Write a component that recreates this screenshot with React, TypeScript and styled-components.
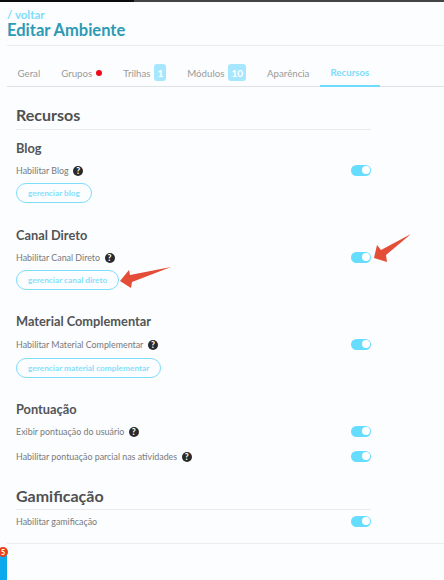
import styled, { createGlobalStyle } from 'styled-components'

const GlobalStyle = createGlobalStyle`
  html, body {
    margin: 0;
    padding: 0;
    height: 580px;
    overflow: hidden;
    background: #fbfdfe;
    font-family: Lato, "Open Sans", sans-serif;
  }
`

const Page = styled.div`
  position: relative;
  width: 444px;
  height: 580px;
  overflow: hidden;
`

const TopBar = styled.div`
  height: 2px;
  background: linear-gradient(to right, #0c0c0c 134px, #444 134px);
`

const Header = styled.header`
  margin-left: 7px;
  height: 44px;
  padding-top: 7px;
  box-sizing: border-box;
  border-bottom: 1px solid #eaeced;
`

const BackLink = styled.a`
  display: block;
  font-size: 11.5px;
  line-height: 12px;
  font-weight: 700;
  color: #7fdcfb;
`

const PageTitle = styled.h1`
  margin: 0;
  font-size: 16.5px;
  line-height: 19px;
  font-weight: 700;
  color: #2c9ab5;
`

const Tabs = styled.nav`
  display: flex;
  margin-left: 7px;
  height: 41px;
  box-sizing: border-box;
  border-bottom: 1px solid #dfe2e5;
`

const Tab = styled.div<{ $active?: boolean }>`
  display: flex;
  align-items: center;
  gap: 4px;
  height: 41px;
  box-sizing: border-box;
  padding: 12px 10.5px 0;
  font-size: 9.7px;
  font-weight: ${(p) => (p.$active ? 700 : 400)};
  color: ${(p) => (p.$active ? '#7fdcfb' : '#9a9a9a')};
  border-bottom: ${(p) => (p.$active ? '2px solid #6fdcff' : 'none')};
`

const Dot = styled.span`
  width: 6px;
  height: 6px;
  border-radius: 50%;
  background: #ef0a1a;
`

const CountBadge = styled.span`
  display: flex;
  align-items: center;
  justify-content: center;
  min-width: 11px;
  height: 17px;
  padding: 0 3px;
  box-sizing: border-box;
  border-radius: 3px;
  background: #a6e7ff;
  color: #fff;
  font-size: 10px;
  font-weight: 700;
`

const Content = styled.main`
  width: 355px;
  margin-left: 16px;
`

const SectionTitle = styled.h2<{ $height: number }>`
  margin: 0;
  padding-top: 17px;
  height: ${(p) => p.$height}px;
  box-sizing: border-box;
  font-size: 16px;
  line-height: 22px;
  font-weight: 700;
  color: #4f5052;
  border-bottom: 1px solid #e9ebec;
`

const Group = styled.section<{ $height: number }>`
  height: ${(p) => p.$height}px;
`

const GroupTitle = styled.h3`
  margin: 0;
  padding-top: 9px;
  font-size: 12.8px;
  line-height: 18px;
  font-weight: 700;
  color: #535456;
`

const Row = styled.div<{ $height: number }>`
  display: flex;
  align-items: center;
  justify-content: space-between;
  height: ${(p) => p.$height}px;
`

const Label = styled.span`
  display: flex;
  align-items: center;
  gap: 4.5px;
  font-size: 8.9px;
  font-weight: 400;
  color: #777a7d;
`

const HelpIcon = styled.span`
  display: flex;
  align-items: center;
  justify-content: center;
  width: 10px;
  height: 10px;
  margin-top: 2px;
  border-radius: 50%;
  background: #2a2a2a;
  color: #fff;
  font-size: 8.5px;
  line-height: 10px;
  font-weight: 900;
`

const Toggle = styled.span`
  position: relative;
  width: 20px;
  height: 11px;
  border-radius: 6px;
  background: #66dcff;
  &::after {
    content: '';
    position: absolute;
    top: 1.5px;
    right: 1.5px;
    width: 8px;
    height: 8px;
    border-radius: 50%;
    background: #fff;
  }
`

const PillButton = styled.button`
  display: block;
  height: 20px;
  padding: 0 11px;
  border: 1px solid #7fdcfb;
  border-radius: 10px;
  background: transparent;
  color: #85e0fd;
  font-family: inherit;
  font-size: 8.3px;
  font-weight: 700;
`

const Footer = styled.div`
  margin: 11px 0 0 7px;
  border-top: 1px solid #eaeced;
`

const SideTab = styled.div`
  position: absolute;
  left: 0;
  bottom: 0;
  width: 7px;
  height: 27px;
  background: #0aa9ee;
`

const SideBadge = styled.span`
  position: absolute;
  left: -2px;
  top: -6px;
  width: 10px;
  height: 10px;
  border-radius: 50%;
  background: #e8401f;
  color: #fff;
  font-size: 7px;
  line-height: 10px;
  font-weight: 900;
  text-align: center;
`

const ArrowLayer = styled.svg`
  position: absolute;
  left: 0;
  top: 0;
  pointer-events: none;
`

const Help = () => <HelpIcon>?</HelpIcon>

export default function App() {
  return (
    <Page>
      <GlobalStyle />
      <TopBar />
      <Header>
        <BackLink>/ voltar</BackLink>
        <PageTitle>Editar Ambiente</PageTitle>
      </Header>
      <Tabs>
        <Tab>Geral</Tab>
        <Tab>
          Grupos <Dot />
        </Tab>
        <Tab>
          Trilhas <CountBadge>1</CountBadge>
        </Tab>
        <Tab>
          Módulos <CountBadge>10</CountBadge>
        </Tab>
        <Tab>Aparência</Tab>
        <Tab $active>Recursos</Tab>
      </Tabs>
      <Content>
        <SectionTitle $height={43}>Recursos</SectionTitle>
        <Group $height={87}>
          <GroupTitle>Blog</GroupTitle>
          <Row $height={26}>
            <Label>
              Habilitar Blog <Help />
            </Label>
            <Toggle />
          </Row>
          <PillButton>gerenciar blog</PillButton>
        </Group>
        <Group $height={86}>
          <GroupTitle>Canal Direto</GroupTitle>
          <Row $height={26}>
            <Label>
              Habilitar Canal Direto <Help />
            </Label>
            <Toggle />
          </Row>
          <PillButton>gerenciar canal direto</PillButton>
        </Group>
        <Group $height={88}>
          <GroupTitle>Material Complementar</GroupTitle>
          <Row $height={28}>
            <Label>
              Habilitar Material Complementar <Help />
            </Label>
            <Toggle />
          </Row>
          <PillButton>gerenciar material complementar</PillButton>
        </Group>
        <Group $height={77}>
          <GroupTitle>Pontuação</GroupTitle>
          <Row $height={26}>
            <Label>
              Exibir pontuação do usuário <Help />
            </Label>
            <Toggle />
          </Row>
          <Row $height={24}>
            <Label>
              Habilitar pontuação parcial nas atividades <Help />
            </Label>
            <Toggle />
          </Row>
        </Group>
        <SectionTitle $height={42}>Gamificação</SectionTitle>
        <Row $height={22}>
          <Label>Habilitar gamificação</Label>
          <Toggle />
        </Row>
      </Content>
      <Footer />
      <SideTab>
        <SideBadge>5</SideBadge>
      </SideTab>
      <ArrowLayer width="444" height="580" viewBox="0 0 444 580">
        <polygon points="120,281 129,270 130,275 171,267 132,282 131,288" fill="#e44d37" />
        <polygon points="374,258 377,245 381,250 411,234 386,255 387,262" fill="#e44d37" />
      </ArrowLayer>
    </Page>
  )
}
